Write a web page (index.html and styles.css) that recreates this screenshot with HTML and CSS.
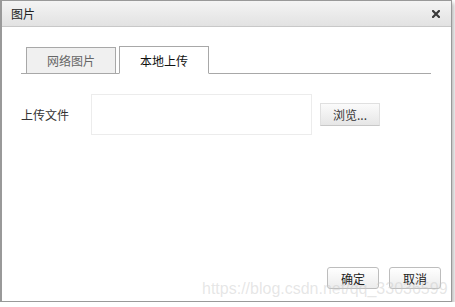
FILE: index.html
```html
<!DOCTYPE html>
<html lang="zh">
<head>
<meta charset="utf-8">
<title>图片</title>
<link rel="stylesheet" href="styles.css">
</head>
<body>
<div class="dialog">
  <div class="titlebar">
    <span class="title">图片</span>
    <svg class="close" width="8" height="8" viewBox="0 0 8 8"><path d="M1 1L7 7M7 1L1 7" stroke="#3a3a3a" stroke-width="2.2" stroke-linecap="square"/></svg>
  </div>
  <div class="content">
    <div class="tabs">
      <div class="tab">网络图片</div>
      <div class="tab active">本地上传</div>
    </div>
    <div class="row">
      <span class="label">上传文件</span>
      <div class="filebox"></div>
      <div class="browse">浏览...</div>
    </div>
    <div class="footer">
      <div class="btn">确定</div>
      <div class="btn">取消</div>
    </div>
  </div>
  <div class="watermark">https://blog.csdn.net/qq_33036599</div>
</div>
</body>
</html>
```

FILE: styles.css
```css
html, body {
  margin: 0;
  padding: 0;
  background: #fff;
}
body {
  font-family: "Noto Sans CJK SC", "Noto Sans", sans-serif;
  font-size: 12px;
  color: #222;
}
.dialog {
  position: relative;
  box-sizing: border-box;
  width: 452px;
  height: 302px;
  border: 1px solid #999;
  border-left-width: 2px;
  box-shadow: 2px 3px 4px rgba(0,0,0,0.28);
  display: flex;
  flex-direction: column;
  background: #fff;
  overflow: hidden;
}
.titlebar {
  box-sizing: border-box;
  height: 26px;
  border-bottom: 1px solid #c8c8c8;
  background: linear-gradient(#f4f4f4, #e2e2e2);
  display: flex;
  align-items: center;
  justify-content: space-between;
  padding: 0 11px 0 9px;
}
.title {
  font-size: 12px;
  color: #222;
  line-height: 14px;
}
.close {
  display: block;
}
.content {
  flex: 1;
  display: flex;
  flex-direction: column;
  padding: 20px 20px 12px 19px;
}
.tabs {
  display: flex;
  gap: 3px;
  padding-left: 5px;
  border-bottom: 1px solid #a8a8a8;
  height: 26px;
  align-items: flex-end;
}
.tab {
  box-sizing: border-box;
  width: 90px;
  height: 27px;
  margin-bottom: -1px;
  border: 1px solid #a8a8a8;
  background: #f0f0f0;
  color: #666;
  display: flex;
  align-items: center;
  justify-content: center;
  font-size: 12px;
}
.tab.active {
  height: 28px;
  width: 90px;
  background: #fff;
  color: #111;
  border-bottom-color: #fff;
}
.row {
  display: flex;
  align-items: center;
  margin-top: 20px;
}
.label {
  width: 70px;
  font-size: 12px;
  color: #333;
}
.filebox {
  box-sizing: border-box;
  width: 221px;
  height: 41px;
  border: 1px solid #ececec;
}
.browse {
  box-sizing: border-box;
  margin-left: 8px;
  width: 60px;
  height: 23px;
  border: 1px solid #e0e0e0;
  border-bottom-color: #c8c8c8;
  background: linear-gradient(#fbfbfb, #e6e6e6);
  display: flex;
  align-items: center;
  justify-content: center;
  color: #333;
  font-size: 12px;
}
.footer {
  margin-top: auto;
  margin-right: -10px;
  display: flex;
  justify-content: flex-end;
  gap: 10px;
}
.btn {
  box-sizing: border-box;
  width: 52px;
  height: 22px;
  border: 1px solid #bdbdbd;
  border-radius: 3px;
  background: linear-gradient(#ffffff, #ececec);
  display: flex;
  align-items: center;
  justify-content: center;
  color: #222;
  font-size: 12px;
}
.watermark {
  position: absolute;
  left: 200px;
  top: 279px;
  font-family: "Liberation Sans", Arial, sans-serif;
  font-size: 16px;
  color: rgba(200,200,200,0.45);
  white-space: nowrap;
  pointer-events: none;
}
```
